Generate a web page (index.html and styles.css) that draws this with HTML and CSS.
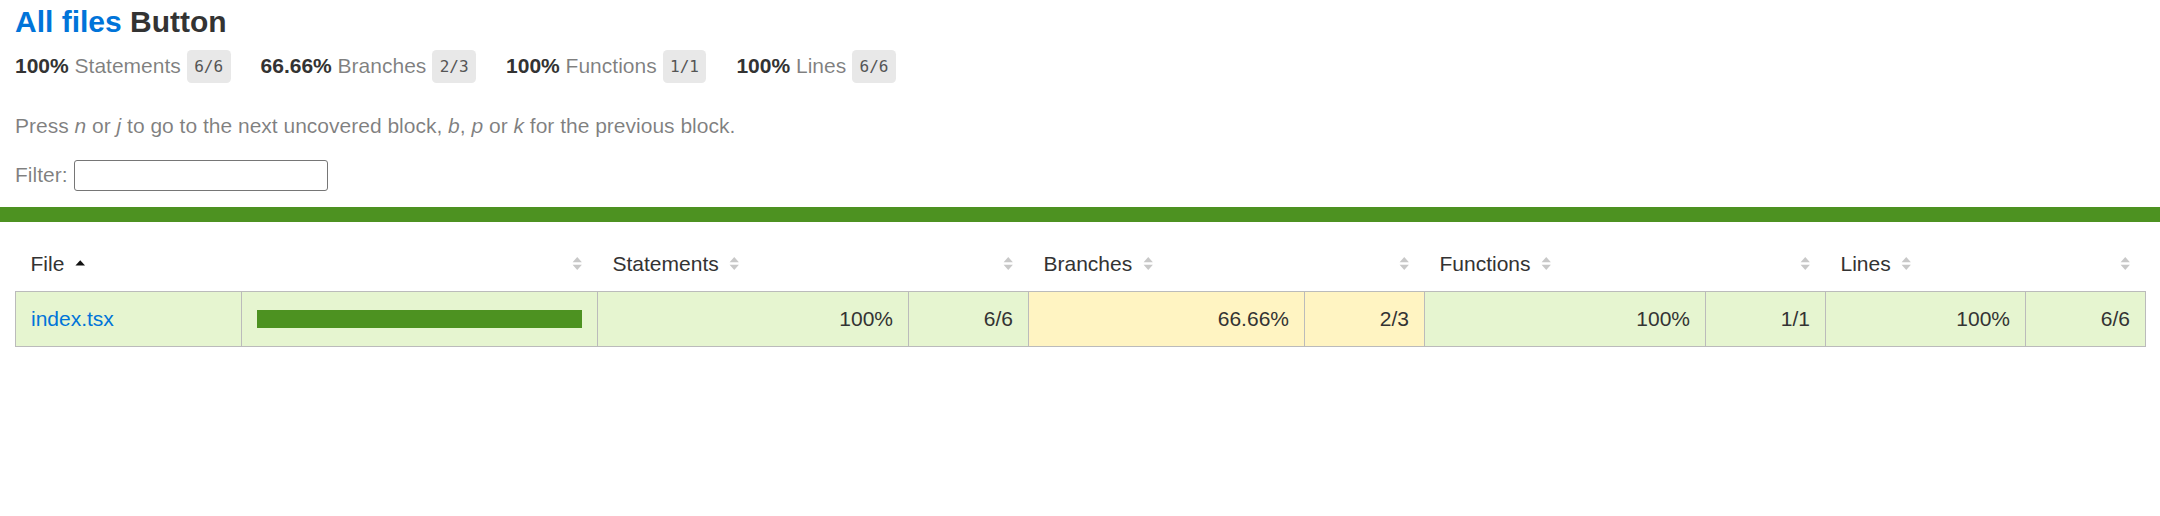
FILE: index.html
```html
<!DOCTYPE html>
<html lang="en">
<head>
<meta charset="utf-8">
<title>Code coverage report for Button</title>
<link rel="stylesheet" href="styles.css">
</head>
<body>
<div class="wrapper">
  <div class="pad1 top">
    <h1><a href="#">All files</a> Button</h1>
    <div class="summary">
      <div class="summary-item"><span class="strong">100% </span><span class="quiet">Statements</span> <span class="fraction">6/6</span></div>
      <div class="summary-item"><span class="strong">66.66% </span><span class="quiet">Branches</span> <span class="fraction">2/3</span></div>
      <div class="summary-item"><span class="strong">100% </span><span class="quiet">Functions</span> <span class="fraction">1/1</span></div>
      <div class="summary-item"><span class="strong">100% </span><span class="quiet">Lines</span> <span class="fraction">6/6</span></div>
    </div>
    <p class="quiet hint">Press <em>n</em> or <em>j</em> to go to the next uncovered block, <em>b</em>, <em>p</em> or <em>k</em> for the previous block.</p>
    <div class="quiet filter"><span>Filter:</span><input type="search" class="file-search"></div>
  </div>
  <div class="status-line high"></div>
  <div class="pad1">
    <table class="coverage-summary">
      <colgroup>
        <col class="c-file"><col class="c-pic"><col class="c-spct"><col class="c-abs"><col class="c-bpct"><col class="c-abs"><col class="c-fpct"><col class="c-abs"><col class="c-lpct"><col class="c-abs">
      </colgroup>
      <thead>
        <tr>
          <th class="file">File<svg class="sorter" viewBox="0 0 7 10"><path d="M0.3 6.4 3.5 2.8 6.7 6.4Z" fill="#111"/></svg></th>
          <th class="pic"><svg class="sorter" viewBox="0 0 7 10"><path class="arr" d="M0.4 4.2 3.5 0.6 6.6 4.2Z M0.4 5.8 3.5 9.4 6.6 5.8Z"/></svg></th>
          <th class="pct">Statements<svg class="sorter" viewBox="0 0 7 10"><path class="arr" d="M0.4 4.2 3.5 0.6 6.6 4.2Z M0.4 5.8 3.5 9.4 6.6 5.8Z"/></svg></th>
          <th class="abs"><svg class="sorter" viewBox="0 0 7 10"><path class="arr" d="M0.4 4.2 3.5 0.6 6.6 4.2Z M0.4 5.8 3.5 9.4 6.6 5.8Z"/></svg></th>
          <th class="pct">Branches<svg class="sorter" viewBox="0 0 7 10"><path class="arr" d="M0.4 4.2 3.5 0.6 6.6 4.2Z M0.4 5.8 3.5 9.4 6.6 5.8Z"/></svg></th>
          <th class="abs"><svg class="sorter" viewBox="0 0 7 10"><path class="arr" d="M0.4 4.2 3.5 0.6 6.6 4.2Z M0.4 5.8 3.5 9.4 6.6 5.8Z"/></svg></th>
          <th class="pct">Functions<svg class="sorter" viewBox="0 0 7 10"><path class="arr" d="M0.4 4.2 3.5 0.6 6.6 4.2Z M0.4 5.8 3.5 9.4 6.6 5.8Z"/></svg></th>
          <th class="abs"><svg class="sorter" viewBox="0 0 7 10"><path class="arr" d="M0.4 4.2 3.5 0.6 6.6 4.2Z M0.4 5.8 3.5 9.4 6.6 5.8Z"/></svg></th>
          <th class="pct">Lines<svg class="sorter" viewBox="0 0 7 10"><path class="arr" d="M0.4 4.2 3.5 0.6 6.6 4.2Z M0.4 5.8 3.5 9.4 6.6 5.8Z"/></svg></th>
          <th class="abs"><svg class="sorter" viewBox="0 0 7 10"><path class="arr" d="M0.4 4.2 3.5 0.6 6.6 4.2Z M0.4 5.8 3.5 9.4 6.6 5.8Z"/></svg></th>
        </tr>
      </thead>
      <tbody>
        <tr>
          <td class="file high"><a href="#">index.tsx</a></td>
          <td class="pic high"><div class="chart"><div class="cover-fill" style="width: 100%"></div><div class="cover-empty" style="width: 0%"></div></div></td>
          <td class="pct high">100%</td>
          <td class="abs high">6/6</td>
          <td class="pct medium">66.66%</td>
          <td class="abs medium">2/3</td>
          <td class="pct high">100%</td>
          <td class="abs high">1/1</td>
          <td class="pct high">100%</td>
          <td class="abs high">6/6</td>
        </tr>
      </tbody>
    </table>
  </div>
</div>
</body>
</html>
```

FILE: styles.css
```css
*, *::before, *::after { box-sizing: border-box; }
html, body { margin: 0; padding: 0; }
body {
  font-family: "Liberation Sans", Arial, Helvetica, sans-serif;
  font-size: 21px;
  color: #333;
  background: #fff;
}
a { color: #0074D9; text-decoration: none; }
.pad1 { padding: 15px; }
.top { padding-top: 4.5px; }
h1 { font-size: 30px; margin: 0; font-weight: bold; }
.strong { font-weight: bold; }
.quiet { color: rgba(0, 0, 0, 0.5); }

.summary { display: flex; }
.summary-item { padding: 15px 30px 15px 0; white-space: nowrap; }
.fraction {
  font-family: "DejaVu Sans Mono", "Liberation Mono", monospace;
  font-size: 16px;
  color: #555;
  background: #E8E8E8;
  padding: 7px 7.5px;
  border-radius: 4.5px;
  vertical-align: middle;
}
.hint { margin: 21px 0; }
.filter {
  display: flex;
  align-items: center;
  gap: 6px;
  height: 33.3px;
}
.file-search {
  width: 254px;
  height: 31.5px;
  margin: 1px 0 0 0;
  border: 1px solid #767676;
  border-radius: 3px;
  background: #fff;
  font-size: 20px;
  padding: 1px 3px;
}

.status-line { height: 15px; }
.status-line.high { background: rgb(77, 146, 33); }

.coverage-summary {
  border-collapse: collapse;
  width: 100%;
  table-layout: fixed;
}
.c-file { width: 226px; }
.c-pic { width: 356px; }
.c-spct { width: 311px; }
.c-abs { width: 120px; }
.c-bpct { width: 276px; }
.c-fpct { width: 281px; }
.c-lpct { width: 200px; }
.coverage-summary tr { border-bottom: 1px solid #bbb; }
.coverage-summary tbody { border: 1px solid #bbb; }
.coverage-summary td, .coverage-summary th { padding: 15px; }
.coverage-summary td { border-right: 1px solid #bbb; }
.coverage-summary td:last-child { border-right: none; }
.coverage-summary th {
  text-align: left;
  font-weight: normal;
  white-space: nowrap;
}
.coverage-summary th.pic,
.coverage-summary th.abs,
.coverage-summary td.pct,
.coverage-summary td.abs { text-align: right; }
.coverage-summary td.file { white-space: nowrap; }
.sorter {
  display: inline-block;
  width: 10.5px;
  height: 15px;
  margin-left: 10.5px;
  vertical-align: baseline;
}
.sorter .arr { fill: #c8c8c8; }

.high { background: rgb(230, 245, 208); }
.medium { background: #fff4c2; }
.chart { line-height: 0; }
.cover-fill, .cover-empty { display: inline-block; height: 18px; }
.high .cover-fill { background: rgb(77, 146, 33); }
.cover-empty { background: #fff; }
```
